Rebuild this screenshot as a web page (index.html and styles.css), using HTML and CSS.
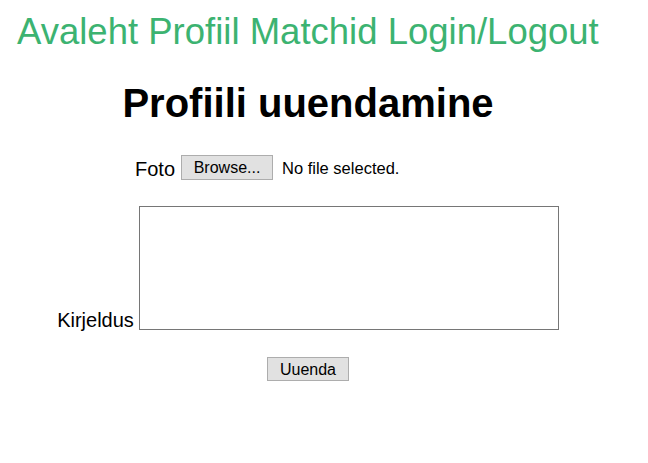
FILE: index.html
```html
<!DOCTYPE html>
<html lang="et">
<head>
<meta charset="utf-8">
<title>Profiili uuendamine</title>
<link rel="stylesheet" href="styles.css">
</head>
<body>
<nav class="nav">
  <a class="nav-link" href="#">Avaleht</a>
  <a class="nav-link" href="#">Profiil</a>
  <a class="nav-link" href="#">Matchid</a>
  <a class="nav-link" href="#">Login/Logout</a>
</nav>
<main class="container">
  <h1 class="title">Profiili uuendamine</h1>
  <form class="form">
    <div class="row file-row">
      <span class="label">Foto</span>
      <button type="button" class="btn browse">Browse...</button>
      <span class="file-name">No file selected.</span>
    </div>
    <div class="row text-row">
      <span class="label desc-label">Kirjeldus</span>
      <textarea class="desc"></textarea>
    </div>
    <div class="row submit-row">
      <button type="button" class="btn submit">Uuenda</button>
    </div>
  </form>
</main>
</body>
</html>
```
FILE: styles.css
```css
body {
  margin: 8px;
  font-family: "Liberation Sans", Arial, sans-serif;
  color: #000;
  background: #fff;
}
.nav {
  margin-top: 3px;
  padding-left: 9px;
  font-size: 36.5px;
  line-height: 42px;
  white-space: nowrap;
}
.nav-link {
  color: #3cb371;
  text-decoration: none;
}
.container {
  width: 600px;
}
.title {
  margin: 27px 0 0 0;
  font-size: 40px;
  line-height: 46px;
  font-weight: bold;
  text-align: center;
}
.form {
  margin-top: 29px;
}
.row {
  display: flex;
  justify-content: center;
}
.file-row {
  align-items: center;
  height: 25px;
}
.label {
  font-size: 20px;
  line-height: 23px;
}
.file-row .label {
  padding-top: 3px;
}
.btn {
  font-family: "Liberation Sans", Arial, sans-serif;
  font-size: 16px;
  color: #000;
  background: #e1e1e1;
  border: 1px solid #adadad;
  border-radius: 0;
  padding: 0;
  margin: 0;
}
.browse {
  width: 92px;
  height: 25px;
  margin-left: 6px;
}
.file-name {
  font-size: 16.5px;
  width: 199px;
  margin-left: 9px;
  padding-top: 2px;
  text-align: left;
}
.text-row {
  margin-top: 26px;
  align-items: flex-end;
}
.desc-label {
  line-height: 20px;
  margin-right: 5px;
}
.desc {
  box-sizing: border-box;
  width: 420px;
  height: 124px;
  border: 1px solid #767676;
  margin: 0;
  padding: 2px;
  resize: none;
}
.submit-row {
  margin-top: 27px;
}
.submit {
  width: 82px;
  height: 24px;
  padding-top: 1px;
}
```
